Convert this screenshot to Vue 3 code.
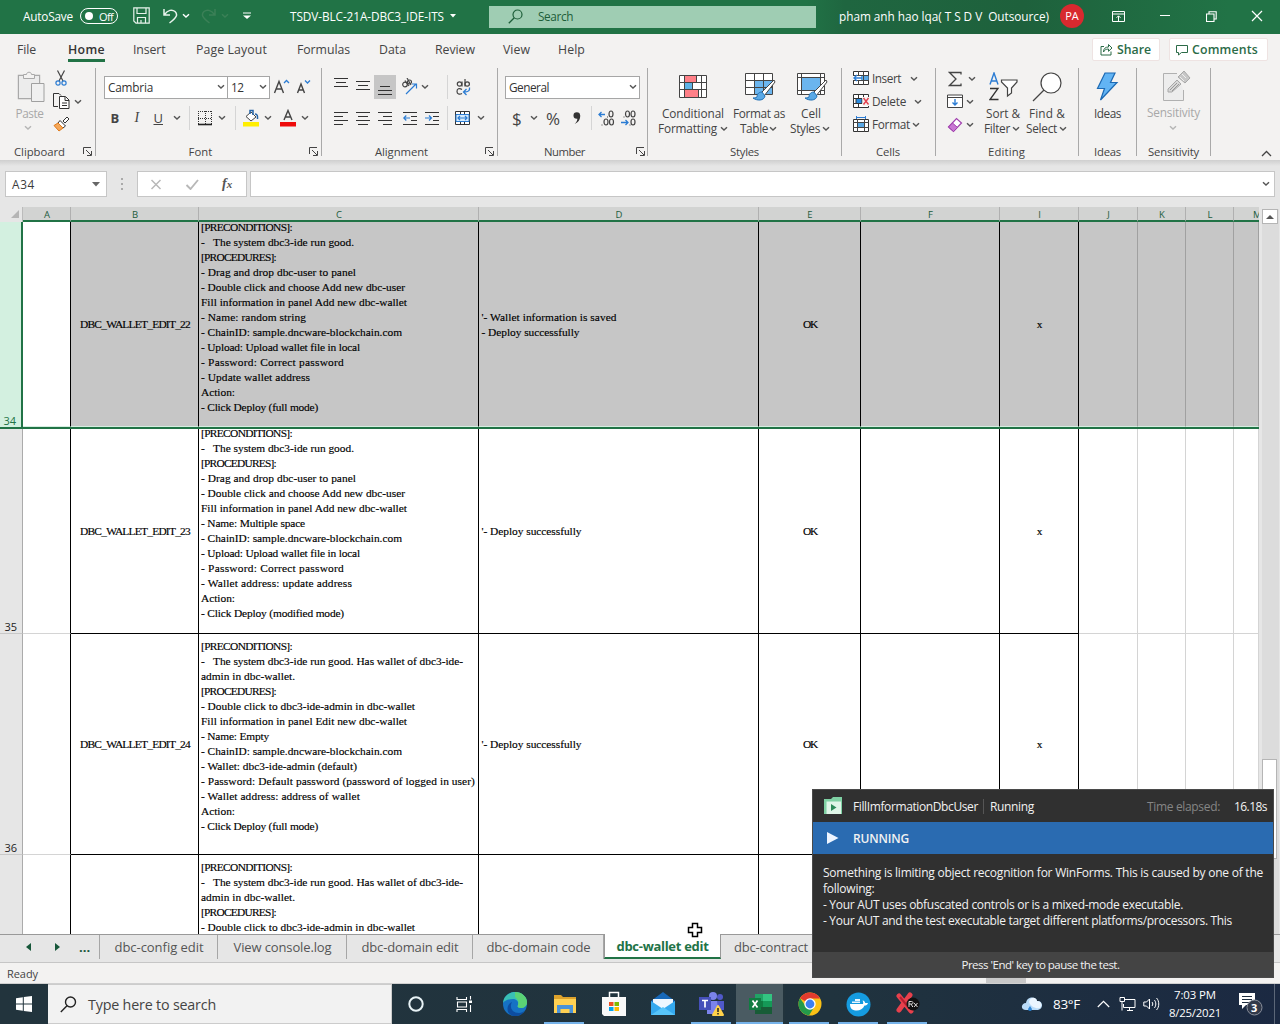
<script setup>
const vFit = {
  mounted(el, { value }) {
    if (!value) return
    const range = document.createRange()
    range.selectNodeContents(el)
    const natural = range.getBoundingClientRect().width
    const count = el.textContent.length
    el.style.letterSpacing = (value - natural) / count + 'px'
  },
}

const chev = '<path d="M1 1.2 4 4 7 1.2" fill="none" stroke="#555" stroke-width="1.4"/>'
const lines = (rows) => rows.map(([x, y, w]) => `<path d="M${x} ${y}.5h${w}" stroke="#333"/>`).join('')
const brush =
  '<path d="M29 8 16 21l3 3L30 10z" fill="#fff" stroke="#444"/><path d="M17 20c-4 0-5 3-5 5-1 1-3 1-4 1 4 3 11 3 12-2z" fill="#5aa9e6" stroke="#1f6fb5"/>'

const icons = {
  chev: [8, 6, chev],
  chevLight: [8, 6, chev.replace('#555', '#b5b5b5')],
  launcher: [9, 9, '<path d="M.5 7V.5H8M3 3l5 5M8.500 4v4.500H4" fill="none" stroke="#444"/>'],
  paste: [28, 32, '<path d="M6 4.500H1.500v23H15M18 4.500h4.500V12" fill="#e8e8e8" stroke="#a9a9a9" stroke-width="1.400"/><path d="M2 5h20v7h-8v15H2z" fill="#ececec"/><path d="M6.500 7.500v-4h3c0-3 5-3 5 0h3v4z" fill="#f3f2f1" stroke="#a9a9a9"/><path d="M14.500 12.500h12.500v18H14.500z" fill="#f0f0f0" stroke="#a0a0a0"/>'],
  cut: [14, 17, '<path d="M3.500.5 9 11M10.500.5 5 11" fill="none" stroke="#444" stroke-width="1.200"/><circle cx="4" cy="13" r="2.100" fill="none" stroke="#2b7cd3" stroke-width="1.200"/><circle cx="10" cy="13" r="2.100" fill="none" stroke="#2b7cd3" stroke-width="1.200"/>'],
  copy: [17, 17, '<path d="M5 13.500H.5v-13H6l2 2" fill="none" stroke="#333"/><path d="M6.500 3.500h6L16 7v8.500H6.500zM12 4v3.500h4M9 10h5M9 12.500h5" fill="#fff" stroke="#333"/>'],
  painter: [17, 17, '<path d="M10 5 14 1l2 2-4 4z" fill="#fff" stroke="#333"/><path d="M7 4.500 12.500 10 10 12 5 7z" fill="#fff" stroke="#333"/><path d="M5 7 1 9.500 6 15l4-3z" fill="#f5a85a" stroke="#e07a1a"/>'],
  growA: [17, 18, '<path d="M1.500 15 6 3.500 10.500 15M3 11h6" fill="none" stroke="#444" stroke-width="1.400"/><path d="M11 5l2.500-2.500L16 5" fill="none" stroke="#2b7cd3" stroke-width="1.300"/>'],
  shrinkA: [15, 18, '<path d="M1.500 15 5 6l3.500 9M2.500 12h5" fill="none" stroke="#444" stroke-width="1.400"/><path d="M9 2.500 11.500 5 14 2.500" fill="none" stroke="#2b7cd3" stroke-width="1.300"/>'],
  border: [16, 16, '<path d="M1 1.500h14M1.500 1v14M14.500 1v14M8.500 1v14M1 8.500h14" fill="none" stroke="#333" stroke-dasharray="1 1"/><path d="M1 14.500h14" stroke="#222" stroke-width="1.600"/>'],
  fill: [17, 18, '<path d="M3 7.500 8 3l5 5-5 4z" fill="#fff" stroke="#444"/><path d="M7 5V1.500h3V6M12 5c3 0 2.500 3 2.500 5" fill="none" stroke="#2464a8" stroke-width="1.500"/><path d="M0 13h16v4.500H0z" fill="#ffee00"/>'],
  fontColor: [17, 18, '<path d="M4 11 8 1.500 12 11M5.500 8h5" fill="none" stroke="#444" stroke-width="1.400"/><path d="M0 13h16v4.500H0z" fill="#ee0b0b"/>'],
  alTop: [14, 24, lines([[0, 3, 14], [2, 7, 10], [0, 11, 14]])],
  alMid: [14, 24, lines([[0, 6, 14], [2, 10, 10], [0, 14, 14]])],
  alBot: [22, 24, '<path d="M0 0h22v24H0z" fill="#c6c6c6"/>' + lines([[6, 11, 10], [4, 15, 14], [4, 19, 14]])],
  orient: [18, 18, '<g fill="none" stroke="#444" stroke-width="1.200"><circle cx="4" cy="6.500" r="2.300"/><path d="M4 2.500 8 8"/><circle cx="8.500" cy="4" r="2"/><path d="m6 0 4 7"/></g><path d="M5 16 15 6M11 6h4.500v4.500" fill="none" stroke="#2b7cd3" stroke-width="1.200"/>'],
  wrap: [15, 18, '<g fill="none" stroke="#444" stroke-width="1.200"><circle cx="3.500" cy="6" r="2.200"/><path d="M6 3.500V8.500M9 1v7.500"/><circle cx="11.200" cy="6" r="2.200"/><path d="M6 11.500C3 9.500 1 11 1 13.500S3.500 17 6 15.500"/></g><path d="M13.500 9.500c.5 3-1 4.500-5.500 4.500M10.500 11 7.500 14l3 3" fill="none" stroke="#2b7cd3" stroke-width="1.300"/>'],
  left: [14, 16, lines([[0, 2, 14], [0, 6, 9], [0, 10, 14], [0, 14, 9]])],
  center: [14, 16, lines([[0, 2, 14], [2, 6, 10], [0, 10, 14], [2, 14, 10]])],
  right: [14, 16, lines([[0, 2, 14], [5, 6, 9], [0, 10, 14], [5, 14, 9]])],
  outdent: [15, 16, lines([[0, 2, 14], [8, 6, 6], [8, 10, 6], [0, 14, 14]]) + '<path d="M7 8H.8M3.300 5.500.8 8l2.500 2.500" fill="none" stroke="#2b7cd3" stroke-width="1.200"/>'],
  indent: [15, 16, lines([[0, 2, 14], [8, 6, 6], [8, 10, 6], [0, 14, 14]]) + '<path d="M0 8h6.500M4 5.500 6.500 8 4 10.500" fill="none" stroke="#2b7cd3" stroke-width="1.200"/>'],
  merge: [16, 16, '<path d="M.5 1.500h14v13H.5z" fill="#fff" stroke="#333"/><path d="M5.500 1v14M9.500 1v14" stroke="#333"/><path d="M1 4.500h13v7H1z" fill="#d5eafb" stroke="#2b7cd3"/><path d="M3 8h9M5 6 3 8l2 2M10 6l2 2-2 2" fill="none" stroke="#2b7cd3" stroke-width="1.200"/>'],
  decInc: [17, 18, '<path d="M7 5.500H1M3.500 3 1 5.500 3.500 8" fill="none" stroke="#2b7cd3" stroke-width="1.300"/><g fill="none" stroke="#444" stroke-width="1.200"><ellipse cx="13" cy="5" rx="2" ry="3"/><ellipse cx="8" cy="13" rx="2" ry="3"/><ellipse cx="13.500" cy="13" rx="2" ry="3"/><path d="M9 8h1M3.500 16h1"/></g>'],
  decDec: [17, 18, '<path d="M1 13.500h7M5.500 11 8 13.500 5.500 16" fill="none" stroke="#2b7cd3" stroke-width="1.300"/><g fill="none" stroke="#444" stroke-width="1.200"><ellipse cx="7.500" cy="5" rx="2" ry="3"/><ellipse cx="13" cy="5" rx="2" ry="3"/><ellipse cx="13" cy="13" rx="2" ry="3"/><path d="M3.500 8h1M9.500 16h1"/></g>'],
  comma: [10, 16, '<circle cx="4.800" cy="5.500" r="3.300" fill="#333"/><path d="M8.200 5.500c.2 4-2 7-5.500 8.500 2-2 3-4 2.500-6z" fill="#333"/>'],
  cond: [29, 24, '<path d="M.5.5h27v22H.5z" fill="#fff"/><path d="M6 1h11v7H6zM6 15h13v7H6z" fill="#ff8088"/><path d="M6 8h8v7H6z" fill="#5fb3e6"/><path d="M.5.5h27v22H.5zM0 7.500h28M0 14.500h28M5.500 0v23M17.500 0v8M13.500 8v7M19.500 15v8M22.500 0v23" fill="none" stroke="#444"/>'],
  table: [31, 30, '<path d="M.5 1.500h27v21H.5z" fill="#fff"/><path d="M9 9h18v14H9z" fill="#6bb5ee"/><path d="M.5 1.500h27v21H.5zM0 8.500h28M0 15.500h28M9.500 1v22M18.500 1v22" fill="none" stroke="#444"/>' + brush],
  cell: [31, 30, '<path d="M.5 1.500h27v21H.5z" fill="#fff"/><path d="M5 6h19v12H5z" fill="#6bb5ee"/><path d="M.5 1.500h27v21H.5zM0 5.500h28M0 18.500h28M4.500 1v22M23.500 1v22" fill="none" stroke="#444"/>' + brush],
  insert: [17, 15, '<path d="M.5.5h15v13H.5z" fill="#fff" stroke="#333"/><path d="M6 4.500h9.500v5H6z" fill="#5aa9e6"/><path d="M0 4.500h16M0 9.500h16M5.500 0v14M10.500 0v14" stroke="#444"/><path d="M0 5h8v4H0z" fill="#fff"/><path d="M9 7H1M4 4 1 7l3 3" fill="none" stroke="#2b7cd3" stroke-width="1.400"/>'],
  delete: [17, 15, '<path d="M.5.5h15v13H.5z" fill="#fff" stroke="#333"/><path d="M3 4.500h6v5H3z" fill="#2b8ce0" stroke="#333"/><path d="M0 4.500h9M0 9.500h9M5.500 0v4M10.500 0v4M5.500 10v4" stroke="#333"/><path d="M9.500 3H17v9H9.500z" fill="#f3f2f1"/><path d="m10.500 4 5 6.500M15.500 4l-5 6.500" stroke="#e33f4c" stroke-width="1.400"/>'],
  format: [17, 17, '<path d="M.5 3.500h15v12H.5z" fill="#fff" stroke="#333"/><path d="M5 6.500h6v5H5z" fill="#5aa9e6"/><path d="M0 6.500h16M0 11.500h16M4.500 3v13M11.500 3v13" stroke="#444"/><path d="M3 1.500h10M3.500 0v3M12.500 0v3" stroke="#2b7cd3"/>'],
  sigma: [14, 16, '<path d="M13 3.500V1.500H1.500L8 8l-6.500 6.500H13v-2" fill="none" stroke="#444" stroke-width="1.300"/>'],
  fillDown: [17, 15, '<path d="M.5 1h15v12.500H.5zM.5 3.500h15" fill="#fff" stroke="#444"/><path d="M8 5v6M5.500 8.500 8 11l2.500-2.500" fill="none" stroke="#2b7cd3" stroke-width="1.400"/>'],
  eraser: [16, 16, '<path d="m1.500 10 8-8.500 5 4.500-8 8.500z" fill="#fff" stroke="#a03fae" stroke-width="1.200"/><path d="m1.500 10 4-4 5 4.500-4 4z" fill="#c877d3" stroke="#a03fae"/>'],
  sort: [29, 30, '<path d="M1 12.500 5 1l4 11.500M2.500 9h5" fill="none" stroke="#2b7cd3" stroke-width="1.400"/><path d="M1 16.500h8L1 27.500h8.500" fill="none" stroke="#333" stroke-width="1.300"/><path d="M12.500 8h15.500v2l-5.500 6v5l-4 3v-8l-6-6z" fill="#fff" stroke="#444" stroke-width="1.200"/>'],
  find: [30, 30, '<circle cx="19" cy="11" r="10" fill="#fff" stroke="#444" stroke-width="1.200"/><path d="M12 18 1 29" stroke="#444" stroke-width="1.300"/>'],
  ideas: [23, 30, '<path d="M9 1h10l-4.500 9.500H21L4.500 28l4-11.500H1.500z" fill="#62b4f4" stroke="#1c69b3" stroke-width="1.200"/>'],
  sens: [28, 32, '<path d="M14 3.500H.5v27h20V20" fill="#ededed" stroke="#b0b0b0"/><path d="m5 19 9-9 4 4-9 8H5z" fill="#d8d8d8" stroke="#a8a8a8"/><path d="m7 20 7-7M9 21l7-7" stroke="#999"/><path d="m15 7 6-6 6 7-5 5z" fill="#c7c7c7" stroke="#a8a8a8"/><path d="m19 4 4 4M17 7l4 4" stroke="#eee"/>'],
  // title bar
  save: [17, 18, '<path d="M.8.8h15.400v15.400H3L.8 14zM4 1v5.500h9V1M4.500 16v-5.500h8V16M8 16v-3" fill="none" stroke="#e8f3ec" stroke-width="1.200"/>'],
  undo: [15, 16, '<path d="M1 1v6h6M1.500 6.500C5 2 9 1 12 3.500c3 3 2 6-5.500 11.500" fill="none" stroke="#e8f3ec" stroke-width="1.500"/>'],
  redo: [15, 16, '<path d="M14 1v6H8M13.500 6.500C10 2 6 1 3 3.500c-3 3-2 6 5.500 11.500" fill="none" stroke="#3b8057" stroke-width="1.500"/>'],
  chevW: [8, 6, chev.replace('#555', '#fff')],
  chevDim: [8, 6, chev.replace('#555', '#3b8057')],
  more: [8, 8, '<path d="M0 1h8" stroke="#fff"/><path d="M0 3.500h8L4 7z" fill="#fff"/>'],
  tri: [6, 4, '<path d="M0 0h6L3 3.500z" fill="#fff"/>'],
  triGrey: [8, 5, '<path d="M0 0h8L4 4.500z" fill="#666"/>'],
  magG: [15, 15, '<circle cx="9.500" cy="5.500" r="4.500" fill="none" stroke="#1d5e39" stroke-width="1.200"/><path d="M6.300 8.700.8 14.200" stroke="#1d5e39" stroke-width="1.300"/>'],
  ribbonOpt: [13, 11, '<path d="M.5.5h12v10H.5zM.5 3h12M6.500 10V5M4.500 6.800l2-2 2 2" fill="none" stroke="#fff"/>'],
  min: [10, 10, '<path d="M0 4.500h10" stroke="#fff"/>'],
  restore: [11, 11, '<path d="M.5 3h7.500v7.500H.5zM3 3V.8h7.200V8H8" fill="none" stroke="#fff" stroke-width="1.100"/>'],
  close: [12, 12, '<path d="m1 1 10 10M11 1 1 11" stroke="#fff" stroke-width="1.200"/>'],
  share: [13, 13, '<path d="M4 3.500H1v8.500h10V8.500M3.500 9c0-3.500 2-5 5-5V1.500L12 5 8.500 8.300V6C6 6 4.500 7 3.500 9z" fill="none" stroke="#2b6b47"/>'],
  comment: [12, 12, '<path d="M.5 1.500h11v7H5.500L2.500 11V8.500h-2z" fill="none" stroke="#2b6b47"/>'],
  up: [11, 7, '<path d="M1 6 5.500 1.500 10 6" fill="none" stroke="#444" stroke-width="1.300"/>'],
  // formula bar
  cross: [12, 11, '<path d="m1.500 1 9 9M10.500 1l-9 9" stroke="#b8b8b8" stroke-width="1.500"/>'],
  check: [14, 11, '<path d="m1.500 6 4 4 7.500-9" fill="none" stroke="#b8b8b8" stroke-width="1.900"/>'],
  // taskbar
  win: [16, 16, '<path d="M0 2.300 6.800 1.300v6.200H0zM7.800 1.100 16 0v7.500H7.800zM0 8.500h6.800v6.200L0 13.700zM7.800 8.500H16V16l-8.200-1.100z" fill="#fff"/>'],
  mag: [17, 17, '<circle cx="10.500" cy="6" r="5" fill="none" stroke="#222" stroke-width="1.400"/><path d="M7 9.800.8 16" stroke="#222" stroke-width="1.400"/>'],
  cortana: [18, 18, '<circle cx="9" cy="9" r="6.700" fill="none" stroke="#e8f3f6" stroke-width="2"/>'],
  taskview: [17, 17, '<g fill="none" stroke="#fff" stroke-width="1.100"><path d="M1 1v2.500h9.500V1M1.500 6h9v5h-9zM1 16v-2.500h9.500V16M14.500 0v3.500M14.500 9v7"/></g><path d="M13 4.500h3V7h-3z" fill="#fff"/>'],
  edge: [26, 26, '<circle cx="13" cy="13" r="12" fill="#1672c4"/><path d="M1 12C2 4 8 1 13 1c7 0 12 5 12 10 0 4-3 6-6 6s-4-1-3-3c1-4-2-6-5-6-5 0-9 2-10 4z" fill="#39bfb4"/><path d="M13 1c7 0 12 5 12 10 0 4-3 6-6 6s-4-1-3-3c1-3 0-6-3-8z" fill="#5bd275"/><path d="M10 11c-3 5 0 11 7 11 2 0 5-1 6-3-3 6-9 7-13 5.500C4 22 4 14 10 11z" fill="#0d4da0"/>'],
  explorer: [24, 22, '<path d="M1 2h7l2 2h13v4H1z" fill="#dda22c"/><path d="M1 6h22v14H1z" fill="#ffd052"/><path d="M4 20v-8h16v8h-3.500v-4h-9v4z" fill="#4a92d8"/>'],
  store: [24, 26, '<path d="M7.500 7V1.500h9V7" fill="none" stroke="#fff" stroke-width="1.500"/><path d="M0 6h24v19H2L0 23z" fill="#f8f8f8"/><path d="M7 11h4.500v4H7z" fill="#ef5022"/><path d="M12.500 11H17v4h-4.500z" fill="#7fba00"/><path d="M7 16h4.500v4H7z" fill="#00a4ef"/><path d="M12.500 16H17v4h-4.500z" fill="#ffb900"/>'],
  mail: [24, 24, '<path d="M0 9 12 0l12 9v14H0z" fill="#1768b8"/><path d="M2 7h20v6l-10 5L2 13z" fill="#eef7ff"/><path d="m0 9 12 8 12-8v14H0z" fill="#35a9ef"/><path d="m0 23 12-8 12 8z" fill="#58c5fa"/>'],
  teams: [27, 27, '<circle cx="15" cy="5" r="4" fill="#7b83eb"/><circle cx="22" cy="6" r="3" fill="#5059c9"/><path d="M9 10h12v13H9z" fill="#7b83eb"/><path d="M19 10h7v9h-6z" fill="#5059c9"/><path d="M1 6h12v13H1z" fill="#4650ba"/><path d="M4 9.500h6M7 9.500v7" stroke="#fff" stroke-width="1.700"/><path d="m20 15 5 9H15z" fill="#ffd24a" stroke="#ffd24a" stroke-width="2" stroke-linejoin="round"/><path d="M20 17v4M20 22v1.500" stroke="#222" stroke-width="1.500"/>'],
  excel: [24, 22, '<path d="M6 1h17v20H6z" fill="#21a366"/><path d="M14 1h9v7h-9z" fill="#33c481"/><path d="M6 8h8v6H6z" fill="#107c41"/><path d="M14 8h9v6h-9z" fill="#159957"/><path d="M6 14h17v7H6z" fill="#185c37"/><path d="M0 5h12v12H0z" fill="#107c41"/><path d="m3.500 7.500 5 7M8.500 7.500l-5 7" stroke="#fff" stroke-width="1.700"/>'],
  chrome: [24, 24, '<circle cx="12" cy="12" r="11.500" fill="#fbc116"/><path d="M12 12 2 6.300A11.500 11.500 0 0 1 22 6.500H12z" fill="#e33b2e"/><path d="M2 6.300A11.500 11.500 0 0 0 11 23.500l5.500-9H8z" fill="#249a4b"/><circle cx="12" cy="12" r="5.700" fill="#fff"/><circle cx="12" cy="12" r="4.400" fill="#3d7ff0"/>'],
  docker: [25, 25, '<circle cx="12.500" cy="12.500" r="12" fill="#159be0"/><path d="M4 12h13c.5-1.500 0-2.500-.5-3.500 2 0 2.500 1.500 2.700 2.500H22c-.5 2-2 2.500-3.500 2.500C17 17.500 13 19 9.500 18.500 5.500 18 4 15.500 4 12z" fill="#fff"/><path d="M6 9.500h8V11H6zM9 7h5v2H9z" fill="#e9f6ff"/>'],
  rx: [26, 24, '<path d="m4 4 12 15M15 3 4 18" stroke="#e8404c" stroke-width="5" stroke-linecap="round"/><path d="m5 5 9 11" stroke="#b51f30" stroke-width="2"/><circle cx="18" cy="12" r="6.500" fill="#111"/><path d="M14 15V9.500h2.500c2 0 2 2.500 0 2.500H14m2 0 1.800 3M19 11l3.500 4M22.500 11l-3.500 4" fill="none" stroke="#ddd"/>'],
  weather: [22, 18, '<path d="M5 15c-6 0-5-7 0-7 1-7 10-7 11-2 6-1 7 8 1 9z" fill="#b9dbf8"/><path d="M8 7c1-6 8-5 8-1 4 0 6 4 3 7-4 1-9-1-11-6z" fill="#eaf5ff"/><path d="m9 11 2 3a2 2 0 1 1-4 0z" fill="#2f86d6"/>'],
  tray: [13, 8, '<path d="M.8 7 6.500 1.300 12.200 7" fill="none" stroke="#fff" stroke-width="1.200"/>'],
  net: [17, 16, '<path d="M6 3.500h10v8H4.500V8M8 14.500h6M10.500 12v2.500M1 1.500h4.500v4H1zM3 5.500v9" fill="none" stroke="#fff"/>'],
  vol: [17, 14, '<path d="M.8 5h2.700l3-3v10l-3-3H.8z" fill="none" stroke="#fff"/><path d="M9 5c1 1 1 3 0 4M11.300 3c2 2 2 6 0 8M13.500 1c3 3 3 9 0 12" fill="none" stroke="#fff"/>'],
  notif: [26, 24, '<path d="M1 1h16v12H8l-4 4v-4H1z" fill="#fff"/><path d="M4 4.500h10M4 7.500h10M4 10.500h7" stroke="#1d2d3f"/><circle cx="16.500" cy="15.500" r="7.500" fill="#31394a" stroke="#8a909c"/>'],
  testFolder: [18, 18, '<path d="M0 2h7l2-2h9v17H0z" fill="#7fd0a3"/><path d="M2.500 4.500H17V17H2.500z" fill="#dff5e8"/><path d="m7 7 5.500 3.500L7 14z" fill="#2b8a58"/>'],
  play: [12, 12, '<path d="M0 0v12L11.500 6z" fill="#eef5ff"/>'],
  cursor: [17, 17, '<path d="M5.500 1.500h5v4h4v5h-4v4h-5v-4h-4v-5h4z" fill="#fff" stroke="#000" stroke-width="1.500"/>'],
}

// items are given by left edge; gaps are derived so that each row flows
const flow = (start, items) => {
  let pos = start
  return items.map((it) => {
    const w = it.w ?? icons[it.icon]?.[0] ?? 10
    const gap = it.x - pos
    pos = it.x + w
    return { ...it, w, gap }
  })
}
const row = (start, h, ...items) => ({ h, items: flow(start, items) })
const i = (icon, x) => ({ icon, x })
const t = (text, x, w, cls = '') => ({ text, x, w, cls })
const c = (x) => i('chev', x - 4)
const sep = (x) => ({ x, w: 1, cls: 'vsep' })

const groups = [
  { w: 95, caption: 'Clipboard', cx: 14, cw: 51, launch: 83, cols: [
    { w: 49, rows: [row(0, 39, i('paste', 17)), row(0, 14, t('Paste', 15.500, 28, 'dim')), row(0, 15, i('chevLight', 24))] },
    { w: 46, rows: [row(49, 23, i('cut', 54)), row(49, 23, i('copy', 53), c(78)), row(49, 23, i('painter', 53))] },
  ] },
  { w: 226, caption: 'Font', cx: 188.500, cw: 24, launch: 309, cols: [
    { w: 226, rows: [
      row(95, 40, { combo: 'Cambria', x: 104, w: 124, fit: 45 }, { combo: '12', x: 227, w: 43, fit: 12.500 }, i('growA', 273), i('shrinkA', 296)),
      row(95, 22, t('B', 110.500, 9, 'b'), t('I', 134.500, 7, 'it'), t('U', 153.500, 10, 'u'), c(176.500), sep(189), i('border', 197), c(222), sep(235), i('fill', 243), c(268), i('fontColor', 280), c(305)),
    ] },
  ] },
  { w: 176, caption: 'Alignment', cx: 375, cw: 53, launch: 485, cols: [
    { w: 176, rows: [
      row(321, 40, i('alTop', 334), i('alMid', 356), i('alBot', 374), i('orient', 401), c(425), sep(447), i('wrap', 456)),
      row(321, 22, i('left', 334), i('center', 356), i('right', 378), i('outdent', 403), i('indent', 425), sep(447), i('merge', 455), c(480.500)),
    ] },
  ] },
  { w: 150, caption: 'Number', cx: 544, cw: 41, launch: 636, cols: [
    { w: 150, rows: [
      row(497, 40, { combo: 'General', x: 505, w: 135, fit: 40 }),
      row(497, 22, t('$', 512, 10, 'sym'), c(534), t('%', 546, 16, 'sym'), i('comma', 572), sep(591), i('decInc', 598), i('decDec', 620)),
    ] },
  ] },
  { w: 194, caption: 'Styles', cx: 730, cw: 29, cols: [
    { w: 194, rows: [
      row(647, 39, i('cond', 679), i('table', 745), i('cell', 797)),
      row(647, 14, t('Conditional', 662, 62), t('Format as', 733, 52), t('Cell', 801, 20)),
      row(647, 17, t('Formatting', 658, 59), c(724), t('Table', 740, 28), c(773), t('Styles', 790, 30), c(826)),
    ] },
  ] },
  { w: 94, caption: 'Cells', cx: 876, cw: 24, cols: [
    { w: 94, rows: [
      row(841, 23, i('insert', 853), t('Insert', 872, 29), c(914)),
      row(841, 23, i('delete', 853), t('Delete', 872, 34), c(918)),
      row(841, 23, i('format', 853), t('Format', 872, 38), c(916)),
    ] },
  ] },
  { w: 143, caption: 'Editing', cx: 988, cw: 37, cols: [
    { w: 45, rows: [
      row(935, 23, i('sigma', 948), c(972)),
      row(935, 23, i('fillDown', 947), c(970)),
      row(935, 23, i('eraser', 947), c(970)),
    ] },
    { w: 98, rows: [
      row(980, 39, i('sort', 989), i('find', 1032)),
      row(980, 14, t('Sort &', 986, 34), t('Find &', 1029, 36)),
      row(980, 17, t('Filter', 984, 26), c(1016), t('Select', 1026, 31), c(1063)),
    ] },
  ] },
  { w: 58, caption: 'Ideas', cx: 1094, cw: 27, cols: [
    { w: 58, rows: [row(1078, 39, i('ideas', 1096)), row(1078, 14, t('Ideas', 1094, 27))] },
  ] },
  { w: 75, caption: 'Sensitivity', cx: 1148, cw: 51, cols: [
    { w: 74, rows: [row(1136, 37, i('sens', 1163)), row(1136, 16, t('Sensitivity', 1147, 53, 'dim')), row(1136, 15, i('chevLight', 1169))] },
  ] },
]
let edge = 0
for (const g of groups) {
  g.capItems = flow(edge, [t(g.caption, g.cx, g.cw), ...(g.launch ? [i('launcher', g.launch)] : [])])
  edge += g.w
}

const tabs = flow(0, [
  t('File', 17, 19), t('Home', 68, 37, 'on'), t('Insert', 133, 32.500), t('Page Layout', 196, 71), t('Formulas', 297, 53),
  t('Data', 379, 27), t('Review', 435, 40), t('View', 503, 27), t('Help', 558, 27),
])

const heads = ['A', 'B', 'C', 'D', 'E', 'F', 'I', 'J', 'K', 'L', 'M']
const L = {
  pre: ['[PRECONDITIONS]:', 91], sys: ['-   The system dbc3-ide run good.', 153], pro: ['[PROCEDURES]:', 75],
  drag: ['- Drag and drop dbc-user to panel', 155], dbl: ['- Double click and choose Add new dbc-user', 204],
  fill: ['Fill information in panel Add new dbc-wallet', 206], chain: ['- ChainID: sample.dncware-blockchain.com', 201],
  upl: ['- Upload: Upload wallet file in local', 159], pw: ['- Password: Correct password', 143],
  act: ['Action:', 34], full: ['- Click Deploy (full mode)', 117],
  has: ['-   The system dbc3-ide run good. Has wallet of dbc3-ide-', 262], adm: ['admin in dbc-wallet.', 94],
  dadm: ['- Double click to dbc3-ide-admin in dbc-wallet', 214],
}
const ok = ['- Deploy successfully', 100]
const sheet = [
  { n: 34, id: 'DBC_WALLET_EDIT_22', cls: 'sel', d: [["'- Wallet information is saved", 135], [ok[0], 98]],
    c: [L.pre, L.sys, L.pro, L.drag, L.dbl, L.fill, ['- Name: random string', 105], L.chain, L.upl, L.pw, ['- Update wallet address', 109], L.act, L.full] },
  { n: 35, id: 'DBC_WALLET_EDIT_23', cls: 'r35', d: [["'" + ok[0], 100]],
    c: [L.pre, L.sys, L.pro, L.drag, L.dbl, L.fill, ['- Name: Multiple space', 104], L.chain, L.upl, L.pw, ['- Wallet address: update address', 151], L.act, ['- Click Deploy (modified mode)', 143]] },
  { n: 36, id: 'DBC_WALLET_EDIT_24', cls: 'r36', d: [["'" + ok[0], 100]],
    c: [L.pre, L.has, L.adm, L.pro, L.dadm, ['Fill information in panel Edit new dbc-wallet', 206], ['- Name: Empty', 68], L.chain, ['- Wallet: dbc3-ide-admin (default)', 156], ['- Password: Default password (password of logged in user)', 274], ['- Wallet address: address of wallet', 159], L.act, L.full] },
  { n: '', id: '', cls: 'r37', d: [], c: [L.pre, L.has, L.adm, L.pro, L.dadm] },
]

const sheets = [
  ['dbc-config edit', 118, 89], ['View console.log', 129, 98], ['dbc-domain edit', 126, 97],
  ['dbc-domain code', 131, 104], ['dbc-wallet edit', 117, 92, 'cur'], ['dbc-contract', 110, 74, 'last'],
]
const apps = [
  ['cortana', 48, ''], ['taskview', 49, ''], ['edge', 51, ''], ['explorer', 49, 'run'], ['store', 49, ''], ['mail', 49, ''],
  ['teams', 49, 'run'], ['excel', 49, 'run act'], ['chrome', 49, 'run'], ['docker', 49, 'run'], ['rx', 49, 'run'],
]
const toast = [
  ['Something is limiting object recognition for WinForms. This is caused by one of the', 440], ['following:', 51.500],
  ['- Your AUT uses obfuscated controls or is a mixed-mode executable.', 360],
  ['- Your AUT and the test executable target different platforms/processors. This', 409],
]
const titleLeft = flow(0, [
  t('AutoSave', 23, 50), { x: 80, w: 38, toggle: true }, i('save', 133), i('undo', 163), i('chevW', 182),
  i('redo', 201), i('chevDim', 221), i('more', 243), t('TSDV-BLC-21A-DBC3_IDE-ITS', 290, 154), i('tri', 450),
])
const titleRight = flow(816, [
  t('pham anh hao lqa( T S D V  Outsource)', 839, 210), { x: 1060, w: 24, avatar: true }, i('ribbonOpt', 1112),
  i('min', 1160), i('restore', 1206), i('close', 1251),
])
const trayItems = flow(931, [
  i('weather', 1020), t('83°F', 1052, 27, 'temp'), i('tray', 1096), i('net', 1118), i('vol', 1142),
])
const px = (n) => n + 'px'
const size = (n) => ({ width: icons[n][0], height: icons[n][1], viewBox: `0 0 ${icons[n][0]} ${icons[n][1]}` })
</script>

<template>
  <div class="screen">
    <header class="title">
      <div class="strip">
        <div v-for="(it, k) in titleLeft" :key="k" class="item" :style="{ marginLeft: px(it.gap), width: px(it.w) }">
          <svg v-if="it.icon" v-bind="size(it.icon)" v-html="icons[it.icon][2]" />
          <span v-else-if="it.toggle" class="toggle"><i></i><span v-fit="14">Off</span></span>
          <span v-else v-fit="it.w">{{ it.text }}</span>
        </div>
      </div>
      <div class="search"><svg v-bind="size('magG')" v-html="icons.magG[2]" /><span v-fit="35">Search</span></div>
      <div class="strip">
        <div v-for="(it, k) in titleRight" :key="k" class="item" :style="{ marginLeft: px(it.gap), width: px(it.w) }">
          <svg v-if="it.icon" v-bind="size(it.icon)" v-html="icons[it.icon][2]" />
          <span v-else-if="it.avatar" class="avatar">PA</span>
          <span v-else v-fit="it.w">{{ it.text }}</span>
        </div>
      </div>
    </header>

    <nav class="tabs">
      <div v-for="tab in tabs" :key="tab.text" class="tab" :class="tab.cls" :style="{ marginLeft: px(tab.gap), width: px(tab.w) }">
        <span v-fit="tab.w">{{ tab.text }}</span>
      </div>
      <div class="actions">
        <button class="share"><svg v-bind="size('share')" v-html="icons.share[2]" /><span v-fit="34">Share</span></button>
        <button class="comments"><svg v-bind="size('comment')" v-html="icons.comment[2]" /><span v-fit="66">Comments</span></button>
      </div>
    </nav>

    <section class="ribbon">
      <div v-for="g in groups" :key="g.caption" class="group" :style="{ width: px(g.w) }">
        <div class="cols">
          <div v-for="(col, ci) in g.cols" :key="ci" :style="{ width: px(col.w) }">
            <div v-for="(r, ri) in col.rows" :key="ri" class="row" :style="{ height: px(r.h) }">
              <div v-for="(it, k) in r.items" :key="k" class="item" :class="it.cls" :style="{ marginLeft: px(it.gap), width: px(it.w) }">
                <svg v-if="it.icon" v-bind="size(it.icon)" v-html="icons[it.icon][2]" />
                <span v-else-if="it.combo" class="combo"><span v-fit="it.fit">{{ it.combo }}</span><svg v-bind="size('chev')" v-html="icons.chev[2]" /></span>
                <span v-else-if="it.text" v-fit="it.text.length > 1 ? it.w : 0">{{ it.text }}</span>
              </div>
            </div>
          </div>
        </div>
        <div class="caption row">
          <div v-for="(it, k) in g.capItems" :key="k" class="item" :style="{ marginLeft: px(it.gap), width: px(it.w) }">
            <svg v-if="it.icon" v-bind="size(it.icon)" v-html="icons[it.icon][2]" />
            <span v-else v-fit="it.w">{{ it.text }}</span>
          </div>
        </div>
      </div>
      <svg class="collapse" v-bind="size('up')" v-html="icons.up[2]" />
    </section>

    <section class="formula">
      <div class="namebox"><span v-fit="23">A34</span><svg v-bind="size('triGrey')" v-html="icons.triGrey[2]" /></div>
      <div class="dots"><i></i><i></i><i></i></div>
      <div class="fx">
        <svg v-bind="size('cross')" v-html="icons.cross[2]" />
        <svg v-bind="size('check')" v-html="icons.check[2]" />
        <em>f<small>x</small></em>
      </div>
      <div class="input"><svg v-bind="size('chev')" v-html="icons.chev[2]" /></div>
    </section>

    <main class="work">
      <div class="grid">
        <div class="line heads">
          <div class="corner"><i></i></div>
          <div v-for="h in heads" :key="h" class="head">{{ h }}</div>
        </div>
        <div v-for="r in sheet" :key="r.id" class="line" :class="r.cls">
          <div class="num">{{ r.n }}</div>
          <div class="cell a"></div>
          <div class="cell mid k"><span v-if="r.id" v-fit="110">{{ r.id }}</span></div>
          <div class="cell k proc"><p v-for="(l, k) in r.c" :key="k"><span v-fit="l[1]">{{ l[0] }}</span></p></div>
          <div class="cell k exp"><p v-for="(l, k) in r.d" :key="k"><span v-fit="l[1]">{{ l[0] }}</span></p></div>
          <div class="cell mid k"><span v-if="r.id" v-fit="14">OK</span></div>
          <div class="cell k"></div>
          <div class="cell mid k">{{ r.id ? 'x' : '' }}</div>
          <div class="cell"></div>
          <div class="cell"></div>
          <div class="cell"></div>
          <div class="cell"></div>
        </div>
      </div>
      <div class="scroll"><div class="arrow"><i></i></div><div class="thumb"></div></div>
    </main>

    <nav class="sheets">
      <div class="navs"><i class="prev"></i><i class="next"></i><b>...</b></div>
      <div v-for="s in sheets" :key="s[0]" class="sheet" :class="s[3]" :style="{ width: px(s[1]) }"><span v-fit="s[2]">{{ s[0] }}</span></div>
    </nav>
    <footer class="status"><span v-fit="31">Ready</span><div class="view"></div></footer>

    <footer class="taskbar">
      <div class="start"><svg v-bind="size('win')" v-html="icons.win[2]" /></div>
      <div class="find"><svg v-bind="size('mag')" v-html="icons.mag[2]" /><span v-fit="128">Type here to search</span></div>
      <div v-for="a in apps" :key="a[0]" class="app" :class="a[2]" :style="{ width: px(a[1]) }"><svg v-bind="size(a[0])" v-html="icons[a[0]][2]" /></div>
      <div v-for="(it, k) in trayItems" :key="k" class="item" :class="it.cls" :style="{ marginLeft: px(it.gap), width: px(it.w) }">
        <svg v-if="it.icon" v-bind="size(it.icon)" v-html="icons[it.icon][2]" />
        <span v-else v-fit="it.w">{{ it.text }}</span>
      </div>
      <div class="clock"><span v-fit="42">7:03 PM</span><span v-fit="52">8/25/2021</span></div>
      <div class="notif"><svg v-bind="size('notif')" v-html="icons.notif[2]" /><b>3</b></div>
    </footer>

    <aside class="toast">
      <div class="thead">
        <svg v-bind="size('testFolder')" v-html="icons.testFolder[2]" />
        <span class="name" v-fit="125">FillImformationDbcUser</span>
        <span class="state" v-fit="44">Running</span>
        <span class="lbl" v-fit="73">Time elapsed:</span>
        <span v-fit="33">16.18s</span>
      </div>
      <div class="trun"><svg v-bind="size('play')" v-html="icons.play[2]" /><span v-fit="56">RUNNING</span></div>
      <div class="tbody"><p v-for="l in toast" :key="l[0]"><span v-fit="l[1]">{{ l[0] }}</span></p></div>
      <div class="tfoot"><span v-fit="158">Press 'End' key to pause the test.</span></div>
    </aside>
    <svg class="pointer" v-bind="size('cursor')" v-html="icons.cursor[2]" />
  </div>
</template>

<style>
body { margin: 0; overflow: hidden; }
</style>

<style scoped>
.screen { position: relative; width: 1280px; height: 1024px; overflow: hidden; display: flex; flex-direction: column; font: 11.8px/15px "Open Sans", "Noto Sans", sans-serif; color: #3b3b3b; background: #f3f2f1; }
.screen * { box-sizing: border-box; }
span { white-space: pre; }
svg { display: block; flex: none; }
p { margin: 0; }
.item { flex: none; display: flex; align-items: center; }
.row { display: flex; align-items: center; }

.title { height: 34px; flex: none; display: flex; align-items: center; color: #fff; background: linear-gradient(90deg, #217346 0 63%, #1f6640 66%, #1e613c 80%, #217346 96%); }
.title .strip { display: flex; align-items: center; height: 34px; padding-bottom: 2px; }
.title .strip:first-child { width: 489px; flex: none; }
.toggle { display: flex; align-items: center; width: 38px; height: 16px; border: 1px solid #fff; border-radius: 8px; font-size: 11px; }
.toggle i { width: 8px; height: 8px; border-radius: 50%; background: #fff; margin: 0 6px 0 4px; }
.search { width: 327px; height: 22px; flex: none; background: #9fcdb3; color: #1d5e39; display: flex; align-items: center; padding: 0 0 1px 19px; gap: 15px; }
.avatar { width: 24px; height: 24px; border-radius: 50%; background: #d8292f; line-height: 24px; text-align: center; font-size: 11px; }

.tabs { height: 32px; flex: none; display: flex; font-size: 12.3px; color: #444; }
.tab { flex: none; height: 28px; line-height: 31px; }
.tab.on { font-weight: 600; color: #333; border-bottom: 3px solid #217346; }
.actions { display: flex; gap: 9px; margin: 4px 0 0 507px; flex: none; }
.actions button { height: 23px; padding: 0; display: flex; align-items: center; gap: 4px; font: 600 12.3px "Open Sans", sans-serif; color: #2b6b47; background: #fff; border: 1px solid #eee3e2; border-radius: 2px; }
.share { width: 68px; }
.actions .share { padding-left: 7px; }
.actions .comments { width: 99px; padding-left: 6px; gap: 4px; }

.ribbon { height: 94px; flex: none; display: flex; background: #f3f2f1; color: #444; }
.group { flex: none; display: flex; flex-direction: column; padding-top: 1px; background: linear-gradient(#a9a9a9, #a9a9a9) left 0 top 2px / 1px 88px no-repeat; }
.group:first-child { background: none; }
.group:nth-child(9) { background: linear-gradient(#a9a9a9, #a9a9a9) left 0 top 2px / 1px 88px no-repeat, linear-gradient(#a9a9a9, #a9a9a9) right 0 top 2px / 1px 88px no-repeat; }
.cols { display: flex; height: 76px; }
.caption { height: 16px; font-size: 11.3px; }
.dim { color: #a8a8a8; }
.vsep { height: 24px; background: #d5d5d5; }
.b { font-weight: 700; font-size: 13px; }
.it { font: italic 14px "Liberation Serif", serif; }
.u { text-decoration: underline; font-size: 13px; }
.sym { font-size: 17px; }
.combo { width: 100%; height: 23px; border: 1px solid #a6a6a6; background: #fff; display: flex; align-items: center; justify-content: space-between; padding: 0 2px 0 3px; color: #333; }
.collapse { margin: 84px 0 0 50px; }

.formula { height: 47px; flex: none; display: flex; padding: 11px 5px 0; background: linear-gradient(#cfcfcf, #e6e6e6 6px); }
.formula > div { height: 26px; background: #fff; border: 1px solid #c6c6c6; display: flex; align-items: center; }
.formula .namebox { width: 102px; padding: 0 6px; justify-content: space-between; }
.formula .dots { background: none; border: 0; width: 30px; flex-direction: column; justify-content: center; gap: 3px; }
.dots i { width: 2px; height: 2px; background: #aaa; }
.formula .fx { width: 110px; padding-left: 12px; gap: 23px; }
.fx em { font: italic bold 14px "Liberation Serif", serif; color: #555; }
.fx small { font-size: 11px; }
.formula .input { flex: 1; margin-left: 3px; justify-content: flex-end; padding-right: 4px; }

.work { height: 727px; flex: none; display: flex; background: #e6e6e6; }
.grid { width: 1259px; flex: none; overflow: hidden; background: #fff; }
.line { display: grid; grid-template-columns: 23px 48px 128px 280px 280px 102px 139px 79px 59px 48px 48px 25px; }
.heads { height: 15px; }
.corner { background: #e6e6e6; border-right: 1px solid #bbb; display: flex; justify-content: flex-end; align-items: flex-end; padding: 0 3px 4px 0; }
.corner i { border: 4px solid; border-color: transparent #b5b5b5 #b5b5b5 transparent; }
.head { background: #d2d3d2; color: #215c3d; font-size: 9.5px; line-height: 15px; text-align: center; padding-left: 1px; border-right: 1px solid #b0b0b0; border-bottom: 2px solid #217346; overflow: hidden; }
.head:last-child { padding-left: 19px; border-right: 0; text-align: left; }
.sel { height: 207px; border-bottom: 2px solid #217346; }
.r35 { height: 205px; }
.r36 { height: 221px; }
.r37 { height: 79px; }
.num { background: #e6e6e6; border-right: 1px solid #ababab; border-bottom: 1px solid #c8c8c8; display: flex; align-items: flex-end; justify-content: flex-end; padding: 0 5px 0 0; font-size: 11px; line-height: 13px; color: #222; }
.sel .num { background: #d3f0e0; color: #217346; border-right: 2px solid #217346; border-bottom: 0; line-height: 12px; }
.cell { border-right: 1px solid #d4d4d4; border-bottom: 1px solid #d4d4d4; font: 11.4px/15px "Liberation Serif", serif; -webkit-text-stroke: 0.15px #000; color: #000; overflow: hidden; min-width: 0; }
.cell.k { border-right-color: #000; border-bottom-color: #000; }
.cell.a { border-right-color: #000; }
.sel .cell { background: #c6c6c6; border-right-color: #a0a0a0; border-bottom-color: #d5eee0; }
.sel .cell.k { border-right-color: #000; }
.sel .cell.a { background: #fff; border-right-color: #000; }
.r37 .cell, .r37 .num { border-bottom: 0; }
.mid { display: flex; align-items: center; justify-content: center; padding-left: 1px; }
.sel .mid { padding-top: 1px; }
.cell p { height: 15px; }
.proc { padding-left: 2px; }
.proc p:first-child { margin-top: -2px; }
.r35 .proc p:first-child { margin-top: -3px; }
.r36 .proc p:first-child, .r37 .proc p:first-child { margin-top: 5px; }
.exp { padding-left: 2.5px; display: flex; flex-direction: column; justify-content: center; }
.sel .exp { padding-top: 2px; }
.scroll { width: 17px; margin: 2px 0 0 3px; background: #dcdcdc; }
.arrow { width: 16px; height: 15px; border: 1px solid #b5b5b5; background: #fff; display: flex; align-items: center; justify-content: center; }
.arrow i { border: 4px solid transparent; border-top: 0; border-bottom-color: #555; }
.thumb { width: 15px; height: 100px; margin-top: 535px; background: #fff; border: 1px solid #b5b5b5; }

.sheets { height: 29px; flex: none; display: flex; background: #e6e6e6; border-bottom: 1px solid #c6c6c6; font-size: 13px; color: #555; }
.navs { width: 100px; flex: none; display: flex; align-items: center; padding: 0 9px 3px 26px; border-top: 1px solid #999; background: linear-gradient(#a6a6a6, #a6a6a6) right top / 1px 24px no-repeat; }
.navs i { border: 4px solid transparent; }
.navs .prev { border-right-color: #17573a; border-left-width: 0; margin-right: 24px; border-right-width: 5px; }
.navs .next { border-left-color: #17573a; border-right-width: 0; border-left-width: 5px; margin-right: 19px; }
.navs b { color: #17573a; }
.sheet { flex: none; height: 26px; border-top: 1px solid #999; display: flex; align-items: center; justify-content: center; background: linear-gradient(#a6a6a6, #a6a6a6) right top / 1px 24px no-repeat; }
.sheet.cur { height: 25px; padding-top: 2px; background: #fff; border: 1px solid #999; border-top: 0; border-bottom: 2px solid #217346; color: #217346; font-weight: 700; }
.sheet.last { flex: 1 0 110px; justify-content: flex-start; padding-left: 13px; background: none; }
.status { height: 21px; flex: none; display: flex; align-items: center; padding-left: 7px; font-size: 11px; border-bottom: 1px solid #d0d0d0; color: #444; }
.view { width: 40px; height: 20px; background: #c8c8c8; margin-left: 948px; }

.taskbar { height: 40px; flex: none; display: flex; align-items: center; background: linear-gradient(90deg, #22343d, #20333e 65%, #1b2942); color: #fff; }
.start { width: 48px; flex: none; display: flex; justify-content: center; }
.find { width: 344px; height: 40px; flex: none; background: #f2f2f2; border: 1px solid #ccc; border-left: 0; color: #444; display: flex; align-items: center; gap: 11px; padding-left: 12px; font-size: 14.3px; }
.app { height: 40px; flex: none; display: flex; align-items: center; justify-content: center; position: relative; }
.app.run::after { content: ""; position: absolute; left: 4px; right: 5px; bottom: 0; height: 2px; background: #76b3ea; }
.app.act { background: linear-gradient(90deg, #4a5b62 47px, #22343d 47px); }
.app.act::after { left: 0; right: 2px; }
.temp { font-size: 13.5px; }
.clock { width: 70px; display: flex; flex-direction: column; align-items: center; line-height: 18px; font-size: 11.4px; }
.notif { margin-left: 9px; width: 37px; height: 40px; display: flex; align-items: center; position: relative; left: -1px; border-right: 1px solid #5c6778; }
.notif b { position: absolute; left: 13px; top: 16px; font-size: 11px; }

.toast { position: absolute; left: 812px; top: 789px; width: 462px; height: 189px; border: 1px solid #4a4a4a; background: #303030; color: #f2f2f2; display: flex; flex-direction: column; }
.thead { height: 32px; display: flex; align-items: center; padding-left: 11px; font-size: 12px; }
.thead .name { width: 131px; margin-left: 11px; border-right: 1px solid #555; }
.thead .state { width: 157px; flex: none; margin-left: 6px; }
.thead .lbl { width: 87px; flex: none; color: #858585; }
.trun { height: 32px; background: #2a6bb1; display: flex; align-items: center; gap: 14px; padding-left: 14px; font-weight: 600; font-size: 12px; }
.tbody { flex: 1; padding: 11px 0 0 10px; line-height: 16px; font-size: 12px; }
.tfoot { height: 25px; background: #444; text-align: center; line-height: 25px; font-size: 11.5px; padding-right: 5px; }
.pointer { position: absolute; left: 687px; top: 922px; }
</style>
